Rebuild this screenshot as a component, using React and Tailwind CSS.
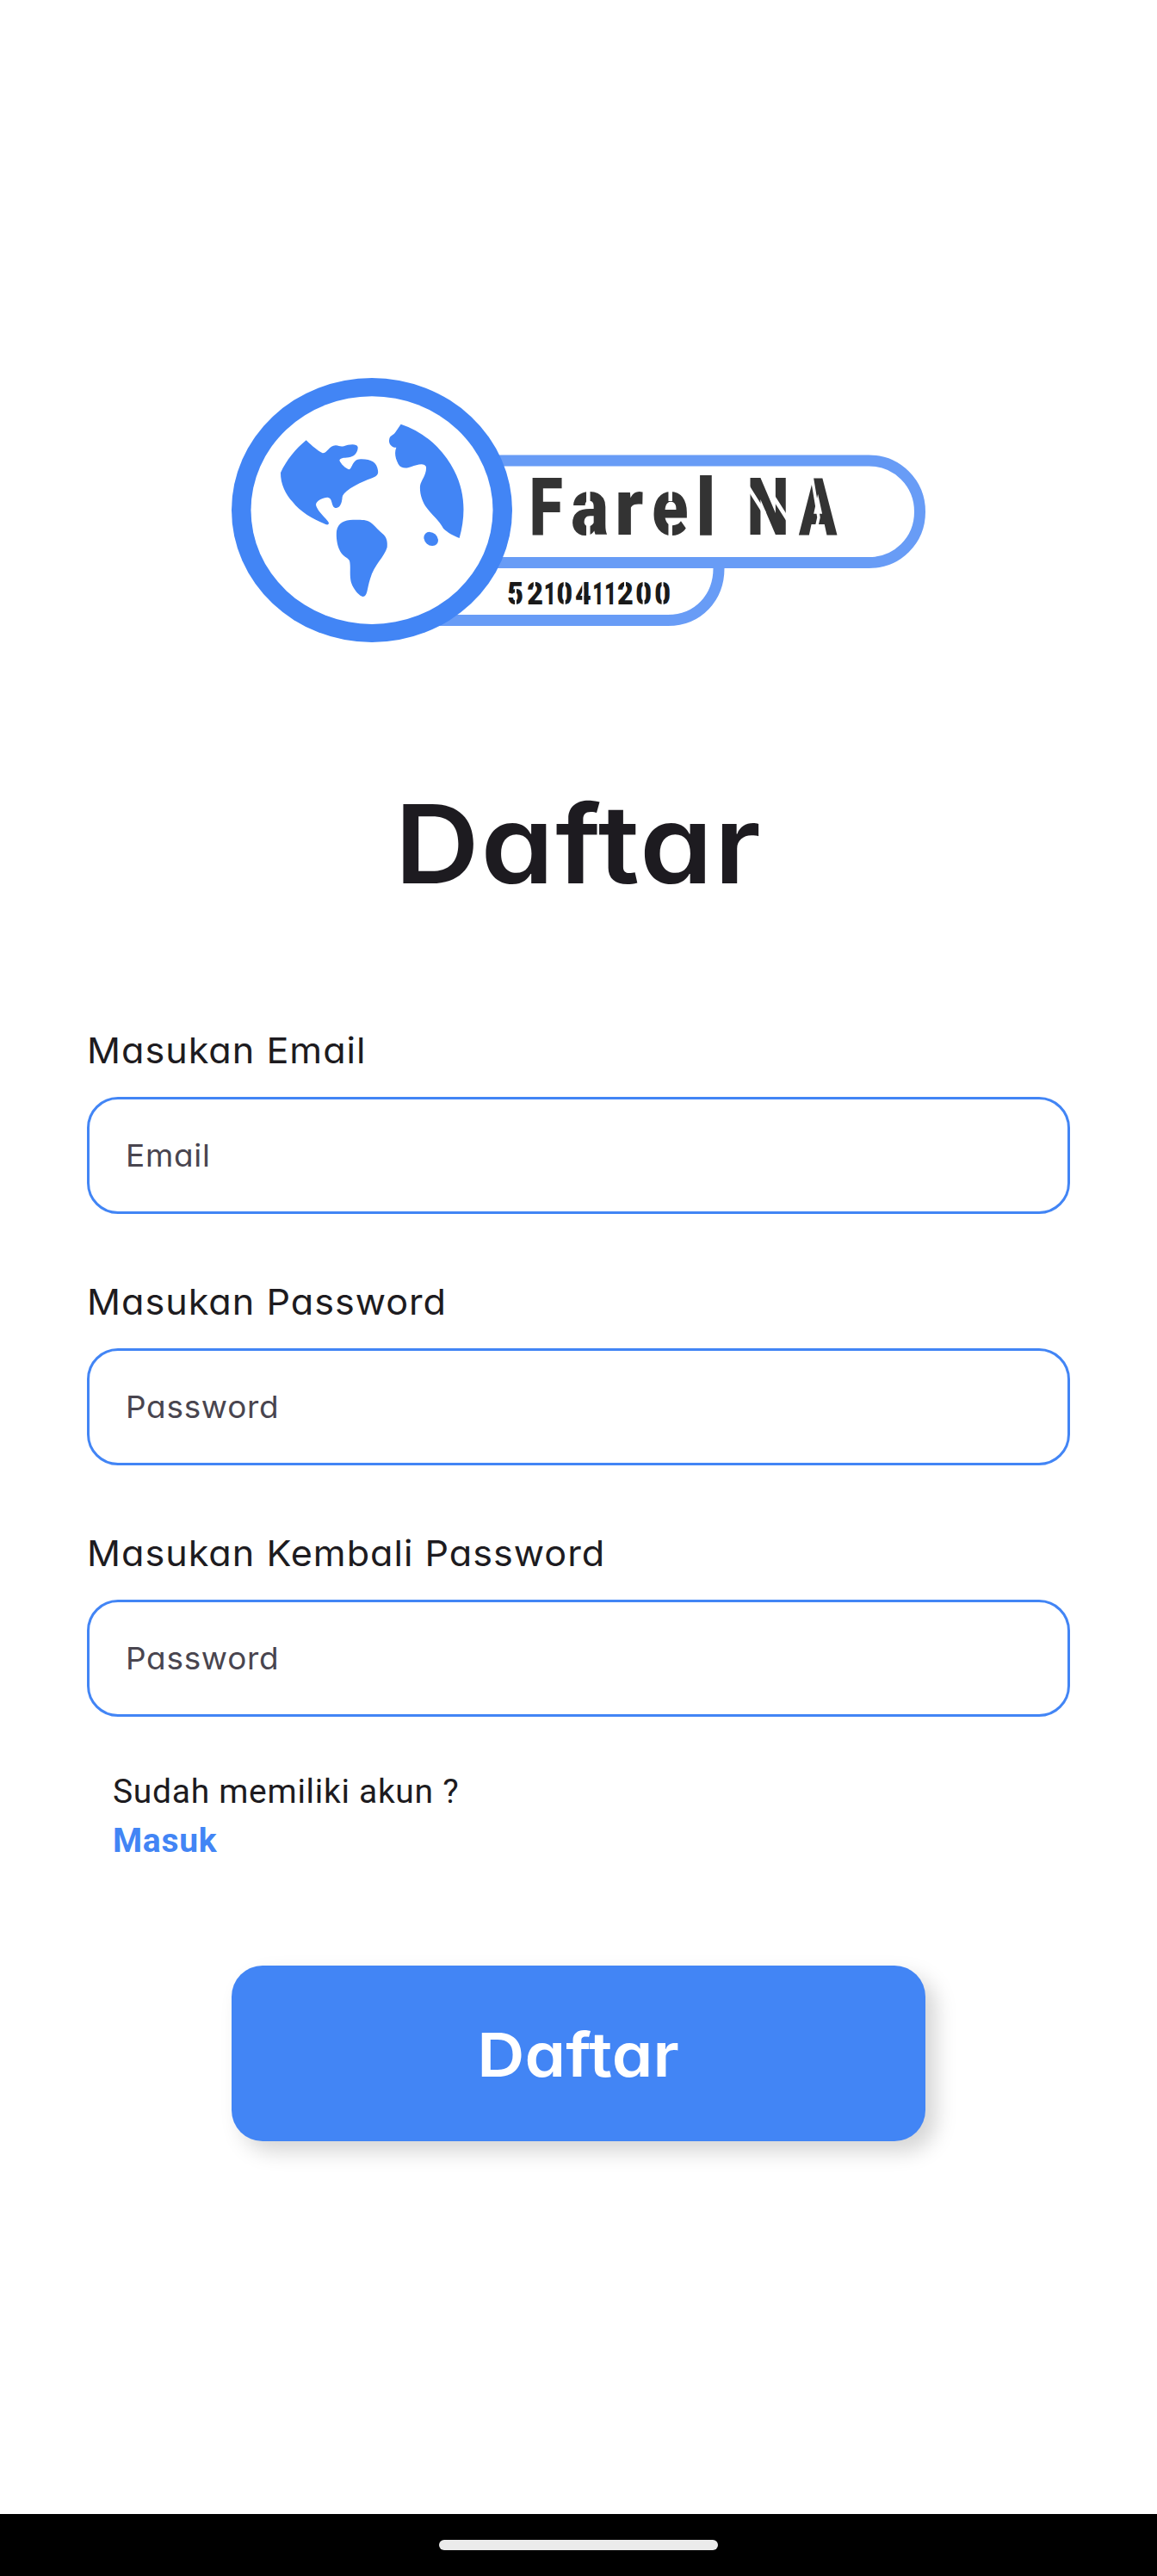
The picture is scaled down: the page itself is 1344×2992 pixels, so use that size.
import React from "react";

const NAME = [
  ["F", 614.7, 39], ["a", 663.2, 43.7], ["r", 714.2, 33.2], ["e", 757.3, 42.2],
  ["l", 808.5, 22.8], [" ", 835, 20], ["N", 867.8, 48.8], ["A", 928, 44.3],
];
const NUMBER = [
  ["5", 589.2, 18.8], ["2", 612.2, 18.8], ["1", 631.8, 14.2], ["0", 646.5, 18.6], ["4", 668, 18.8],
  ["1", 688.3, 13.2], ["1", 702.1, 14.2], ["2", 717, 18.8], ["0", 738.3, 18.8], ["0", 760.2, 18.8],
];

function Glyphs({ items, ...rest }) {
  return (
    <text fontFamily="Roboto, sans-serif" fontWeight="900" className="whitespace-pre" {...rest}>
      {items.map(([ch, x, w], i) => (
        <tspan key={i} x={x} textLength={w} lengthAdjust="spacingAndGlyphs">{ch}</tspan>
      ))}
    </text>
  );
}

function Logo() {
  return (
    <svg width="806" height="308" viewBox="269 439 806 308" className="block overflow-visible">
      <g fill="none" stroke="#689cf6" strokeWidth="13">
        <path d="M500 720.5H776C811 720.5 835 694 835 660" />
        <path d="M560 535H1009.5C1042 535 1068.5 561 1068.5 594.5C1068.5 628 1042 653.5 1009.5 653.5H560" />
      </g>
      <ellipse cx="432" cy="592.5" rx="163" ry="153.5" fill="#4285f5" />
      <ellipse cx="432" cy="592.6" rx="140.5" ry="132.3" fill="#fff" />
      <g transform="translate(260 430) scale(.33333)" fill="#4285f5">
        <path d="M287 244C310 266 326 280 344 289C360 290 366 263 390 262C402 262 404 268 418 265C434 259 463 254 467 268C468 282 457 300 442 302C424 306 407 303 403 314C409 328 423 340 436 346C448 345 447 310 476 310C512 309 533 320 537 349C541 370 524 373 500 382C466 396 419 420 413 442C412 460 406 480 392 480C372 480 382 444 361 443C347 443 321 454 321 469C326 495 365 522 366 533C364 541 357 538 350 535C310 518 264 492 240 459C216 434 197 396 198 357C218 314 250 274 287 244Z" />
        <path d="M450 521C480 521 500 519 516 534C529 546 542 560 557 573C568 584 571 600 569 617C560 650 523 678 510 727C498 765 501 788 485 789C470 787 445 754 442 731C438 706 443 684 438 664C432 652 415 650 405 630C394 609 391 580 393 560C398 532 420 521 450 521Z" />
        <path d="M617 188C700 215 768 279 803 350C842 426 843 507 821 585C801 577 778 565 765 551C752 525 727 507 708 481C691 459 682 430 684 403C688 381 707 365 705 337C700 321 672 329 654 336C640 342 618 345 608 327C597 306 594 287 601 269C589 271 575 259 576 245C577 226 590 228 598 216Z" />
        <ellipse cx="722" cy="588" rx="27" ry="22" transform="rotate(42 722 588)" />
      </g>
      <Glyphs items={NAME} y="621" fontSize="92" fill="#333" />
      <Glyphs items={NUMBER} y="701.5" fontSize="37" fill="#1a1a1a" />
      {/* stencil bridges */}
      <g fill="none" stroke="#fff" strokeWidth="4.5">
        <path d="M683.3 566V584M683.3 607V623M778.7 566V582M778.7 607V623" />
        <path d="M868.5 565L888 596M897 575L916 605" />
        <path d="M943 553L951 601L946 623" strokeWidth="3.5" />
      </g>
      <g fill="none" stroke="#fff" strokeWidth="2">
        <path d="M599 684V703M620.8 674V683M655.7 674V703M677.3 674V703M726 674V683M747.6 674V703M769.6 674V703" />
      </g>
    </svg>
  );
}

function Field({ label, hint }) {
  return (
    <label className="mb-[72px] block">
      <span className="block h-[60px] origin-left scale-x-[1.04] text-[41.5px] leading-[60px] tracking-[0.95px] whitespace-nowrap text-[#1d1b20]">{label}</span>
      <div className="mt-6 flex h-[136px] items-center rounded-[36px] border-3 border-[#4285f5] pt-[2px] pl-[42px] text-[35.5px] tracking-[0.7px] text-[#49454f]">
        <span className="inline-block origin-left scale-x-[1.04]">{hint}</span>
      </div>
    </label>
  );
}

export default function App() {
  return (
    <main className="flex h-[2992px] w-[1344px] flex-col bg-white font-['Inter',sans-serif] [font-feature-settings:'cv11']">
      <div className="mt-[439px] flex justify-center">
        <Logo />
      </div>
      <h1 className="mt-[153px] scale-x-[1.08] text-center text-[126px] leading-[160px] font-semibold tracking-[1.6px] text-[#1d1b20]">Daftar</h1>
      <div className="mt-[130px] px-[101px]">
        <Field label="Masukan Email" hint="Email" />
        <Field label="Masukan Password" hint="Password" />
        <Field label="Masukan Kembali Password" hint="Password" />
      </div>
      <div className="-mt-[13px] pl-[131px] font-['Roboto',sans-serif] text-[39px] leading-[57px] tracking-[0.7px] text-[#1d1b20]">
        <p>Sudah memiliki akun ?</p>
        <p className="font-bold text-[#4285f5]">Masuk</p>
      </div>
      <button className="mx-auto mt-[116px] h-[204px] w-[806px] rounded-[36px] bg-[#4285f5] pt-[3px] text-[70.6px] font-semibold tracking-[0.2px] text-white shadow-[12px_12px_24px_rgba(0,0,0,0.17)]">
        <span className="inline-block scale-x-[1.08]">Daftar</span>
      </button>
      <div className="mt-auto flex h-[72px] justify-center bg-black pt-[30px]">
        <div className="h-3 w-[324px] rounded-full bg-[#ebebeb]" />
      </div>
    </main>
  );
}
